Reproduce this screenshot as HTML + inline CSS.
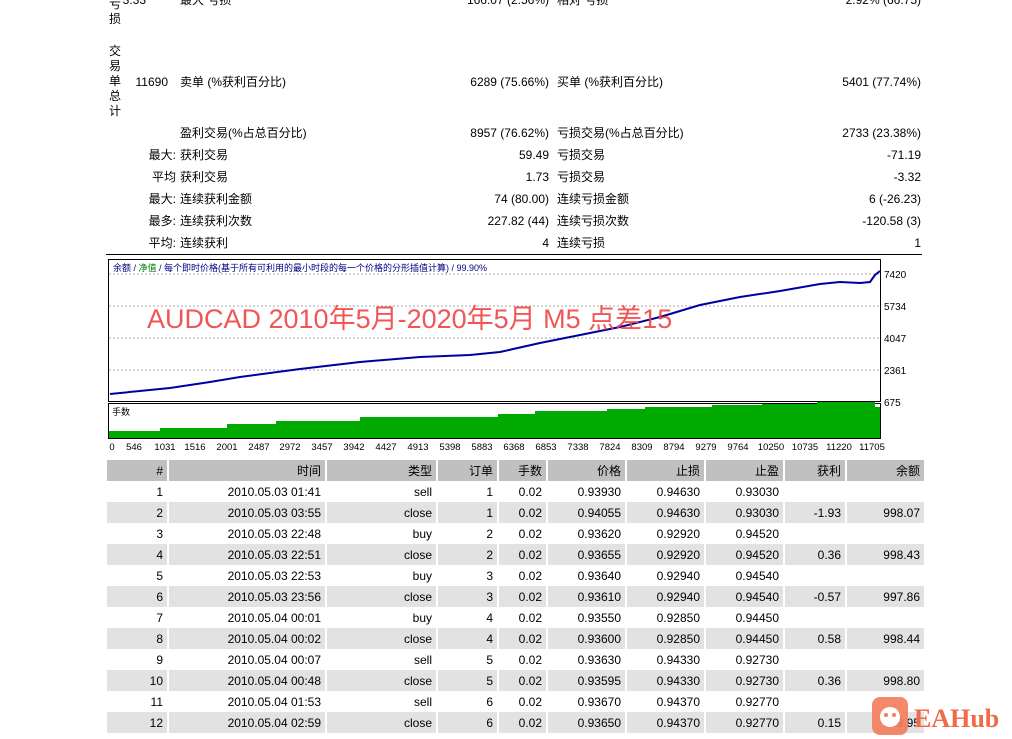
<!DOCTYPE html>
<html><head><meta charset="utf-8"><style>
*{margin:0;padding:0;box-sizing:border-box}
body{width:1012px;height:739px;background:#fff;position:relative;overflow:hidden;font-family:"Liberation Sans","Noto Sans CJK SC",sans-serif;font-size:12px;color:#000}
.a{position:absolute;white-space:nowrap;line-height:14px}
.r{text-align:right}
.v{position:absolute;left:108px;width:14px;line-height:15px;font-size:12px;text-align:center}
table{position:absolute;left:107px;top:460px;border-collapse:collapse;font-size:12px}
td{height:21px;text-align:right;padding:0 4px;border-right:2px solid #fff;white-space:nowrap}
tr.h td{background:#c0c0c0}
tr.g td{background:#e2e2e2}
</style></head><body>
<div class="v" style="top:-3px">亏<br>损</div>
<div class="v" style="top:44px">交<br>易<br>单<br>总<br>计</div>
<div class="a r" style="left:100px;width:46px;top:-7px">3.33</div>
<div class="a" style="left:180px;top:-7px">最大 亏损</div>
<div class="a r" style="left:400px;width:149px;top:-7px">166.07 (2.56%)</div>
<div class="a" style="left:557px;top:-7px">相对 亏损</div>
<div class="a r" style="left:760px;width:161px;top:-7px">2.92% (66.75)</div>

<div class="a r" style="left:100px;width:68px;top:75px">11690</div>
<div class="a" style="left:180px;top:75px">卖单 (%获利百分比)</div>
<div class="a r" style="left:400px;width:149px;top:75px">6289 (75.66%)</div>
<div class="a" style="left:557px;top:75px">买单 (%获利百分比)</div>
<div class="a r" style="left:760px;width:161px;top:75px">5401 (77.74%)</div>

<div class="a" style="left:180px;top:126px">盈利交易(%占总百分比)</div>
<div class="a r" style="left:400px;width:149px;top:126px">8957 (76.62%)</div>
<div class="a" style="left:557px;top:126px">亏损交易(%占总百分比)</div>
<div class="a r" style="left:760px;width:161px;top:126px">2733 (23.38%)</div>

<div class="a r" style="left:120px;width:56px;top:148px">最大:</div><div class="a" style="left:180px;top:148px">获利交易</div><div class="a r" style="left:400px;width:149px;top:148px">59.49</div><div class="a" style="left:557px;top:148px">亏损交易</div><div class="a r" style="left:760px;width:161px;top:148px">-71.19</div>
<div class="a r" style="left:120px;width:56px;top:170px">平均</div><div class="a" style="left:180px;top:170px">获利交易</div><div class="a r" style="left:400px;width:149px;top:170px">1.73</div><div class="a" style="left:557px;top:170px">亏损交易</div><div class="a r" style="left:760px;width:161px;top:170px">-3.32</div>
<div class="a r" style="left:120px;width:56px;top:192px">最大:</div><div class="a" style="left:180px;top:192px">连续获利金额</div><div class="a r" style="left:400px;width:149px;top:192px">74 (80.00)</div><div class="a" style="left:557px;top:192px">连续亏损金额</div><div class="a r" style="left:760px;width:161px;top:192px">6 (-26.23)</div>
<div class="a r" style="left:120px;width:56px;top:214px">最多:</div><div class="a" style="left:180px;top:214px">连续获利次数</div><div class="a r" style="left:400px;width:149px;top:214px">227.82 (44)</div><div class="a" style="left:557px;top:214px">连续亏损次数</div><div class="a r" style="left:760px;width:161px;top:214px">-120.58 (3)</div>
<div class="a r" style="left:120px;width:56px;top:236px">平均:</div><div class="a" style="left:180px;top:236px">连续获利</div><div class="a r" style="left:400px;width:149px;top:236px">4</div><div class="a" style="left:557px;top:236px">连续亏损</div><div class="a r" style="left:760px;width:161px;top:236px">1</div>
<div style="position:absolute;left:106px;top:254px;width:816px;height:1px;background:#000"></div>

<svg style="position:absolute;left:0;top:0" width="1012" height="460">
<rect x="108.5" y="259.5" width="772" height="142" fill="#fff" stroke="#000"/>
<g stroke="#aaa" stroke-dasharray="2,2">
<line x1="109" y1="274" x2="880" y2="274"/><line x1="109" y1="306" x2="880" y2="306"/><line x1="109" y1="338" x2="880" y2="338"/><line x1="109" y1="370" x2="880" y2="370"/>
</g>
<polyline fill="none" stroke="#0000a0" stroke-width="2" points="110,394 170,388 210,382 240,377 300,369 360,362 420,357 470,355 500,352 540,343 580,335 620,327 660,317 700,305 740,297 780,291 820,284 840,282 860,283 870,282 875,275 880,271"/>
<text x="113" y="271" font-size="9" fill="#000080" font-family="Liberation Sans,Noto Sans CJK SC,sans-serif">余额 / <tspan fill="#008000">净值</tspan> / 每个即时价格(基于所有可利用的最小时段的每一个价格的分形插值计算) / 99.90%</text>
<text x="147" y="328" font-size="27" fill="#f04444" fill-opacity="0.9" font-family="Liberation Sans,Noto Sans CJK SC,sans-serif">AUDCAD 2010年5月-2020年5月 M5 点差15</text>
<g font-size="10" font-family="Liberation Sans,sans-serif"><text x="884" y="278">7420</text><text x="884" y="310">5734</text><text x="884" y="342">4047</text><text x="884" y="374">2361</text><text x="884" y="406">675</text></g>
<rect x="108.5" y="403.5" width="772" height="35" fill="#fff" stroke="#000"/>
<text x="112" y="415" font-size="9" font-family="Liberation Sans,Noto Sans CJK SC,sans-serif">手数</text>
<path fill="#00aa00" d="M109,438 V431 H160 V428 H227 V424 H276 V421 H360 V417 H498 V414 H535 V411 H607 V409 H645 V407 H712 V405 H762 V404 H817 V402 H875 V407 H880 V438 Z"/>
<g font-size="9.5" font-family="Liberation Sans,sans-serif" text-anchor="middle">
<text x="112" y="450">0</text><text x="134" y="450">546</text><text x="165" y="450">1031</text><text x="195" y="450">1516</text><text x="227" y="450">2001</text><text x="259" y="450">2487</text><text x="290" y="450">2972</text><text x="322" y="450">3457</text><text x="354" y="450">3942</text><text x="386" y="450">4427</text><text x="418" y="450">4913</text><text x="450" y="450">5398</text><text x="482" y="450">5883</text><text x="514" y="450">6368</text><text x="546" y="450">6853</text><text x="578" y="450">7338</text><text x="610" y="450">7824</text><text x="642" y="450">8309</text><text x="674" y="450">8794</text><text x="706" y="450">9279</text><text x="738" y="450">9764</text><text x="771" y="450">10250</text><text x="805" y="450">10735</text><text x="839" y="450">11220</text><text x="872" y="450">11705</text>
</g>
</svg>

<table>
<tr class="h"><td style="width:61px">#</td><td style="width:158px">时间</td><td style="width:111px">类型</td><td style="width:61px">订单</td><td style="width:49px">手数</td><td style="width:79px">价格</td><td style="width:79px">止损</td><td style="width:79px">止盈</td><td style="width:62px">获利</td><td style="width:79px">余额</td></tr>
<tr><td>1</td><td>2010.05.03 01:41</td><td>sell</td><td>1</td><td>0.02</td><td>0.93930</td><td>0.94630</td><td>0.93030</td><td></td><td></td></tr>
<tr class="g"><td>2</td><td>2010.05.03 03:55</td><td>close</td><td>1</td><td>0.02</td><td>0.94055</td><td>0.94630</td><td>0.93030</td><td>-1.93</td><td>998.07</td></tr>
<tr><td>3</td><td>2010.05.03 22:48</td><td>buy</td><td>2</td><td>0.02</td><td>0.93620</td><td>0.92920</td><td>0.94520</td><td></td><td></td></tr>
<tr class="g"><td>4</td><td>2010.05.03 22:51</td><td>close</td><td>2</td><td>0.02</td><td>0.93655</td><td>0.92920</td><td>0.94520</td><td>0.36</td><td>998.43</td></tr>
<tr><td>5</td><td>2010.05.03 22:53</td><td>buy</td><td>3</td><td>0.02</td><td>0.93640</td><td>0.92940</td><td>0.94540</td><td></td><td></td></tr>
<tr class="g"><td>6</td><td>2010.05.03 23:56</td><td>close</td><td>3</td><td>0.02</td><td>0.93610</td><td>0.92940</td><td>0.94540</td><td>-0.57</td><td>997.86</td></tr>
<tr><td>7</td><td>2010.05.04 00:01</td><td>buy</td><td>4</td><td>0.02</td><td>0.93550</td><td>0.92850</td><td>0.94450</td><td></td><td></td></tr>
<tr class="g"><td>8</td><td>2010.05.04 00:02</td><td>close</td><td>4</td><td>0.02</td><td>0.93600</td><td>0.92850</td><td>0.94450</td><td>0.58</td><td>998.44</td></tr>
<tr><td>9</td><td>2010.05.04 00:07</td><td>sell</td><td>5</td><td>0.02</td><td>0.93630</td><td>0.94330</td><td>0.92730</td><td></td><td></td></tr>
<tr class="g"><td>10</td><td>2010.05.04 00:48</td><td>close</td><td>5</td><td>0.02</td><td>0.93595</td><td>0.94330</td><td>0.92730</td><td>0.36</td><td>998.80</td></tr>
<tr><td>11</td><td>2010.05.04 01:53</td><td>sell</td><td>6</td><td>0.02</td><td>0.93670</td><td>0.94370</td><td>0.92770</td><td></td><td></td></tr>
<tr class="g"><td>12</td><td>2010.05.04 02:59</td><td>close</td><td>6</td><td>0.02</td><td>0.93650</td><td>0.94370</td><td>0.92770</td><td>0.15</td><td>999.95</td></tr>
</table>

<svg style="position:absolute;left:870px;top:693px" width="140" height="44">
<rect x="2" y="4" width="36" height="38" rx="8" fill="#f47c5c" fill-opacity="0.9"/>
<circle cx="20" cy="24" r="10" fill="#fff"/><circle cx="16" cy="22" r="2" fill="#f47c5c"/><circle cx="24" cy="22" r="2" fill="#f47c5c"/>
<text x="44" y="34" font-size="26" fill="#f06a48" font-family="Liberation Serif,serif" font-weight="bold">EAHub</text>
</svg>
</body></html>
